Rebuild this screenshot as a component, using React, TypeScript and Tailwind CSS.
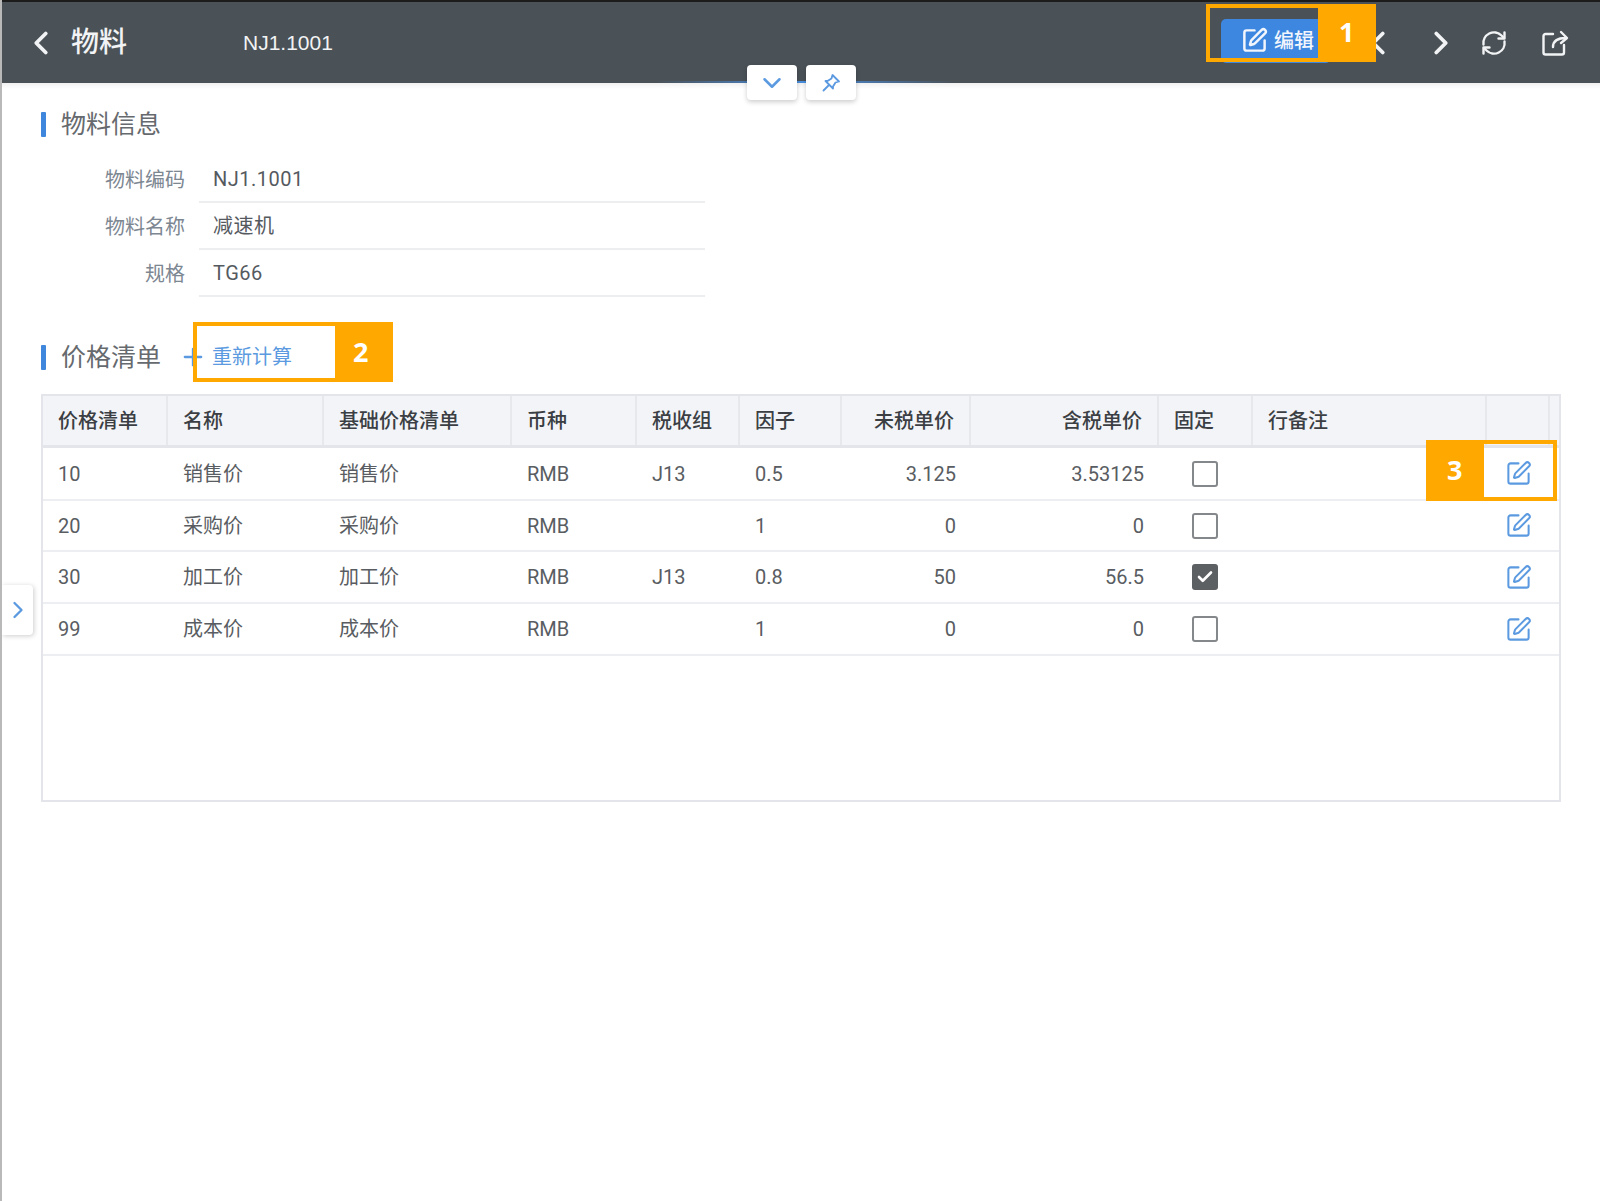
import { Check, ChevronDown, ChevronLeft, ChevronRight, Plus, SquarePen } from "lucide-react";

const font = "[font-family:Roboto,'Noto_Sans_CJK_SC',sans-serif]";

const cols = "grid grid-cols-[125px_156px_188px_125px_103px_102px_129px_188px_94px_234px_63px_1fr]";

const heads = [
  { label: "价格清单" },
  { label: "名称" },
  { label: "基础价格清单" },
  { label: "币种" },
  { label: "税收组" },
  { label: "因子" },
  { label: "未税单价", right: true },
  { label: "含税单价", right: true },
  { label: "固定" },
  { label: "行备注" },
  { label: "" },
  { label: "" },
];

const rows = [
  { no: "10", name: "销售价", base: "销售价", tax: "J13", factor: "0.5", net: "3.125", gross: "3.53125", fixed: false, h: "h-[53px]" },
  { no: "20", name: "采购价", base: "采购价", tax: "", factor: "1", net: "0", gross: "0", fixed: false, h: "h-[51px]" },
  { no: "30", name: "加工价", base: "加工价", tax: "J13", factor: "0.8", net: "50", gross: "56.5", fixed: true, h: "h-[52px]" },
  { no: "99", name: "成本价", base: "成本价", tax: "", factor: "1", net: "0", gross: "0", fixed: false, h: "h-[52px]" },
];

const fields = [
  { label: "物料编码", value: "NJ1.1001" },
  { label: "物料名称", value: "减速机" },
  { label: "规格", value: "TG66" },
];

const RefreshIcon = () => (
  <svg width="28" height="28" viewBox="0 0 28 28" fill="none" stroke="currentColor" strokeWidth="2.4" strokeLinecap="round" strokeLinejoin="round">
    <path d="M3.5 15.5A10.6 10.6 0 0 1 21.5 6.5L24 9" />
    <path d="M24.5 12.5A10.6 10.6 0 0 1 6.5 21.5L4 19" />
    <path d="M24.5 3.5V9.5H18.5" />
    <path d="M3.5 24.5V18.5H9.5" />
  </svg>
);

const ShareIcon = () => (
  <svg width="28" height="28" viewBox="0 0 28 28" fill="none" stroke="currentColor" strokeWidth="2.4" strokeLinecap="round" strokeLinejoin="round">
    <path d="M12 5H4.5A2 2 0 0 0 2.500 7V23.500A2 2 0 0 0 4.500 25.500H21A2 2 0 0 0 23 23.500V16" />
    <path d="M12 18C12 12 16 9 25 9" />
    <path d="M20 3L26 9L20 14" />
  </svg>
);

const PinIcon = () => (
  <svg width="20" height="20" viewBox="0 0 20 20" fill="none" stroke="currentColor" strokeWidth="1.8" strokeLinecap="round" strokeLinejoin="round">
    <path d="M11.500 2L18 8.500L14.500 9.500L12 13.500L12 15.500L4.500 8L6.500 8L10.500 5.500Z" />
    <path d="M7.500 12.500L2.500 17.500" />
  </svg>
);

const Section = ({ title, children, className }: { title: string; children?: React.ReactNode; className: string }) => (
  <div className={`flex items-center ${className}`}>
    <span className="w-[5px] h-[25px] bg-[#3f87dc] rounded-[1px]" />
    <span className="ml-[15px] text-[25px] leading-[25px] text-[#666a6e]">{title}</span>
    {children}
  </div>
);

const Annotation = ({ n, className, fill, numClass }: { n: string; className: string; fill: string; numClass: string }) => (
  <div className={`absolute border-[4px] border-[#ffa900] ${className}`}>
    <div className={`absolute bg-[#ffa900] ${fill}`} />
    <span className={`absolute text-white text-[27px] leading-none font-bold [font-family:'Open_Sans',sans-serif] ${numClass}`}>{n}</span>
  </div>
);

export default function App() {
  return (
    <div className={`relative w-full h-[1201px] overflow-hidden bg-white border-l-2 border-[#b9b9b9] ${font}`}>
      <header className="relative h-[83px] bg-[#4a5157] border-t-2 border-[#1c1c1c] flex items-center text-[#f2f3f4]">
        <ChevronLeft size={38} strokeWidth={2.4} className="ml-[20px] mt-[1px]" />
        <span className="ml-[11px] text-[28px] leading-none font-medium">物料</span>
        <span className="ml-[116px] text-[21px] leading-none font-medium [font-family:'Liberation_Sans',sans-serif]">NJ1.1001</span>
        <div className="ml-auto flex items-center">
          <button className="flex items-center h-[44px] w-[110px] mt-[-4px] pl-[20px] gap-[6px] bg-[#3d87e0] rounded-[5px] text-[20px] font-medium text-[#f2f6fc]">
            <SquarePen size={27} strokeWidth={2.2} />
            编辑
          </button>
          <ChevronLeft size={38} strokeWidth={2.4} className="ml-[28px]" />
          <ChevronRight size={38} strokeWidth={2.4} className="ml-[25px]" />
          <span className="ml-[20px]"><RefreshIcon /></span>
          <span className="ml-[33px] mr-[31px]"><ShareIcon /></span>
        </div>
      </header>
      <div className="h-[6px] bg-gradient-to-b from-[#f1f1f1] to-white" />

      <main className="pl-[39px]">
        <Section title="物料信息" className="mt-[23px]" />
        <div className="mt-[19px] w-[664px]">
          {fields.map((f) => (
            <div key={f.label} className="flex h-[47px] items-center">
              <span className="w-[144px] text-right text-[20px] text-[#7d8792]">{f.label}</span>
              <span className="ml-[14px] flex-1 h-full flex items-center pl-[14px] border-b-2 border-[#eceef0] text-[20px] tracking-[0.5px] text-[#555a5f]">{f.value}</span>
            </div>
          ))}
        </div>

        <Section title="价格清单" className="mt-[46px]">
          <span className="ml-[18px] flex items-center text-[#5b9ae0]">
            <Plus size={28} strokeWidth={2} className="mr-[5px]" />
            <span className="text-[20px] leading-none">重新计算</span>
          </span>
        </Section>

        <div className="mt-[23px] w-[1520px] h-[408px] border-2 border-[#e3e5ea]">
          <div className={`${cols} h-[52px] bg-[#f3f4f8] border-b-[3px] border-[#e3e5ea]`}>
            {heads.map((h, i) => (
              <div key={i} className={`flex items-center px-[15px] border-r-2 border-[#e6e8ec] last:border-r-0 text-[20px] font-medium text-[#3b3f44] ${h.right ? "justify-end" : ""}`}>
                {h.label}
              </div>
            ))}
          </div>
          {rows.map((r) => (
            <div key={r.no} className={`${cols} ${r.h} border-b-2 border-[#eceef1] text-[20px] text-[#595d62]`}>
              <div className="flex items-center px-[15px]">{r.no}</div>
              <div className="flex items-center px-[15px]">{r.name}</div>
              <div className="flex items-center px-[15px]">{r.base}</div>
              <div className="flex items-center px-[15px]">RMB</div>
              <div className="flex items-center px-[15px]">{r.tax}</div>
              <div className="flex items-center px-[15px]">{r.factor}</div>
              <div className="flex items-center justify-end px-[15px]">{r.net}</div>
              <div className="flex items-center justify-end px-[15px]">{r.gross}</div>
              <div className="flex items-center justify-center pr-[2px]">
                {r.fixed ? (
                  <span className="w-[26px] h-[26px] rounded-[3px] bg-[#5d6063] flex items-center justify-center text-white">
                    <Check size={18} strokeWidth={3.5} />
                  </span>
                ) : (
                  <span className="w-[26px] h-[26px] rounded-[3px] border-2 border-[#85888b] bg-white" />
                )}
              </div>
              <div />
              <div className="flex items-center justify-center">
                <SquarePen size={27} strokeWidth={1.8} className="text-[#5b9ae0]" />
              </div>
              <div />
            </div>
          ))}
        </div>
      </main>

      {/* blue line behind the collapse buttons */}
      <div className="absolute left-[653px] top-[81px] w-[300px] h-[2px] bg-gradient-to-r from-transparent via-[#4a90e2] to-transparent" />
      <button className="absolute left-[745px] top-[65px] w-[50px] h-[35px] rounded-[4px] bg-white shadow-[0_2px_5px_rgba(0,0,0,0.2)] flex items-center justify-center text-[#5b9ae0]">
        <ChevronDown size={30} strokeWidth={2} />
      </button>
      <button className="absolute left-[804px] top-[65px] w-[50px] h-[35px] rounded-[4px] bg-white shadow-[0_2px_5px_rgba(0,0,0,0.2)] flex items-center justify-center text-[#5b9ae0]">
        <PinIcon />
      </button>

      <button className="absolute left-0 top-[585px] w-[31px] h-[50px] rounded-r-[4px] bg-white shadow-[1px_1px_5px_rgba(0,0,0,0.2)] flex items-center justify-center text-[#5b9ae0]">
        <ChevronRight size={28} strokeWidth={2} />
      </button>

      <Annotation n="1" className="left-[1204px] top-[4px] w-[170px] h-[58px]" fill="left-[108px] top-[-4px] bottom-[-4px] right-[-4px]" numClass="left-[129px] top-[10px]" />
      <Annotation n="2" className="left-[191px] top-[322px] w-[200px] h-[60px]" fill="left-[138px] top-[-4px] bottom-[-4px] right-[-4px]" numClass="left-[156px] top-[12px]" />
      <Annotation n="3" className="left-[1424px] top-[440px] w-[131px] h-[61px]" fill="left-[-4px] top-[-4px] bottom-[-4px] w-[58px]" numClass="left-[17px] top-[12px]" />
    </div>
  );
}
